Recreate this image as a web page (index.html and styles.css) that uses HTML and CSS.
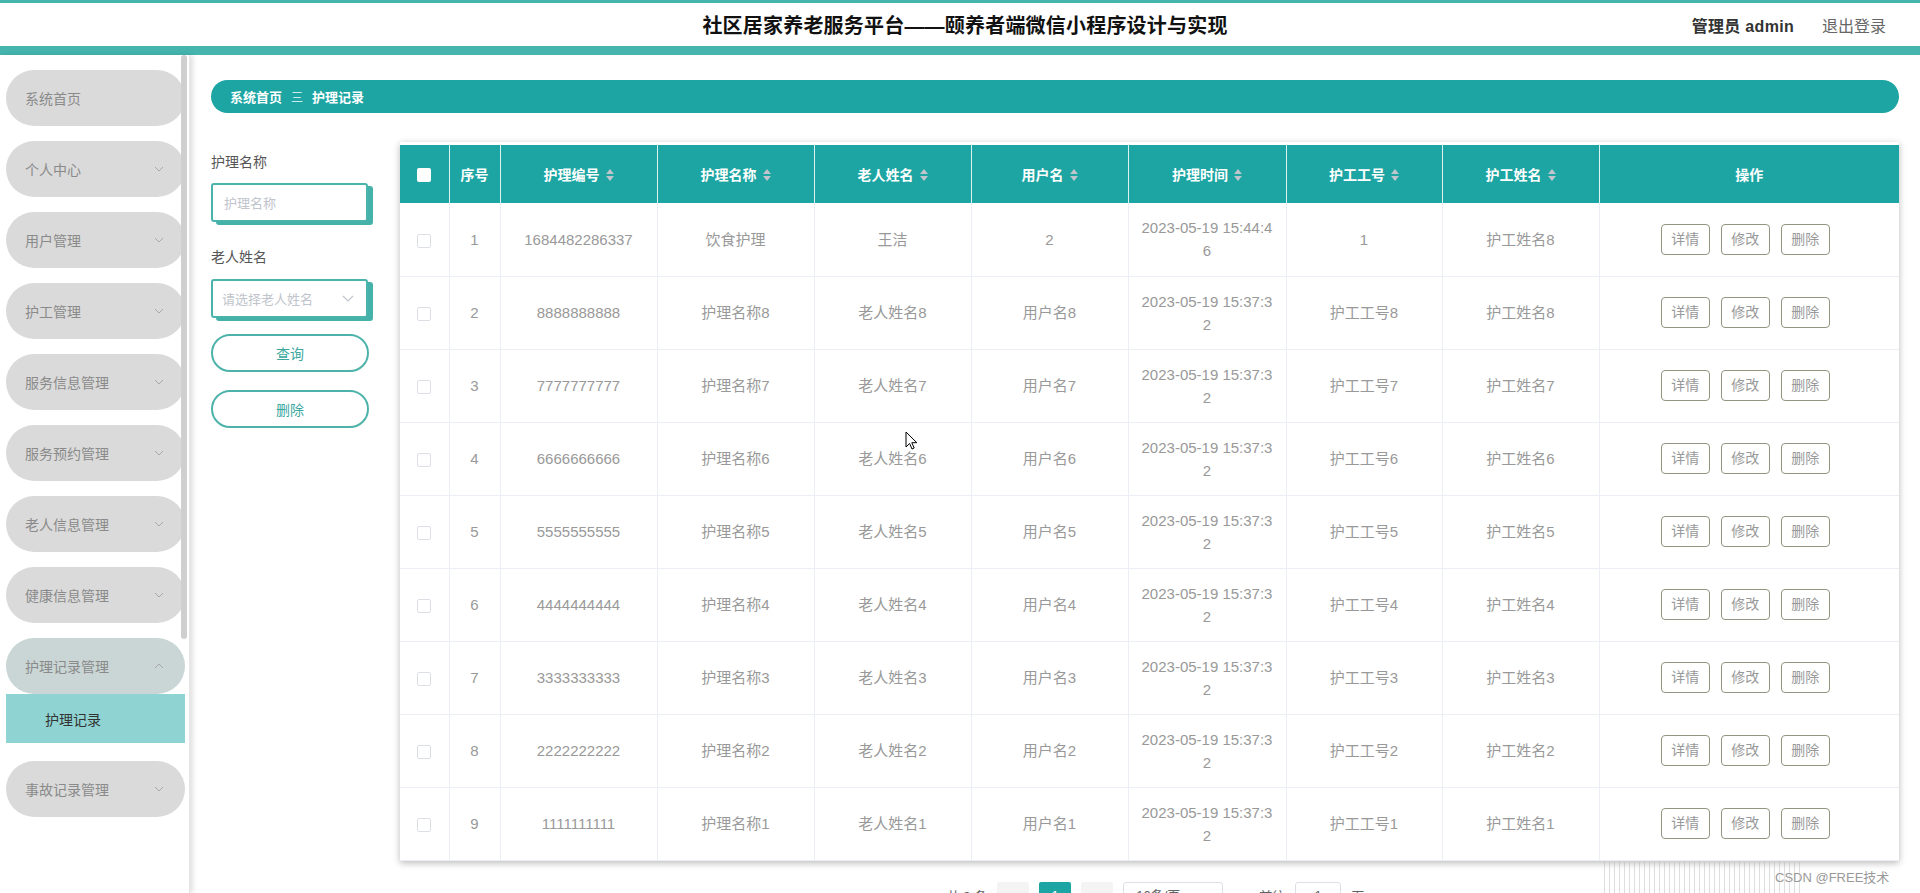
FILE: index.html
```html
<!DOCTYPE html>
<html lang="zh-CN">
<head>
<meta charset="utf-8">
<title>护理记录</title>
<link rel="stylesheet" href="styles.css">
</head>
<body>
<div class="app">
  <header class="topbar">
    <div class="spacer"></div>
    <div class="title">社区居家养老服务平台——颐养者端微信小程序设计与实现</div>
    <div class="user"><span class="admin">管理员 admin</span><span class="logout">退出登录</span></div>
  </header>
  <div class="main">
    <aside class="sidebar">
      <ul class="menu">
        <li class="item"><span>系统首页</span></li>
        <li class="item"><span>个人中心</span><svg class="chev" viewBox="0 0 10 6"><path d="M1 1l4 4 4-4"/></svg></li>
        <li class="item"><span>用户管理</span><svg class="chev" viewBox="0 0 10 6"><path d="M1 1l4 4 4-4"/></svg></li>
        <li class="item"><span>护工管理</span><svg class="chev" viewBox="0 0 10 6"><path d="M1 1l4 4 4-4"/></svg></li>
        <li class="item"><span>服务信息管理</span><svg class="chev" viewBox="0 0 10 6"><path d="M1 1l4 4 4-4"/></svg></li>
        <li class="item"><span>服务预约管理</span><svg class="chev" viewBox="0 0 10 6"><path d="M1 1l4 4 4-4"/></svg></li>
        <li class="item"><span>老人信息管理</span><svg class="chev" viewBox="0 0 10 6"><path d="M1 1l4 4 4-4"/></svg></li>
        <li class="item"><span>健康信息管理</span><svg class="chev" viewBox="0 0 10 6"><path d="M1 1l4 4 4-4"/></svg></li>
        <li class="group open">
          <div class="item active"><span>护理记录管理</span><svg class="chev" viewBox="0 0 10 6"><path d="M1 5l4-4 4 4"/></svg></div>
          <div class="sub">护理记录</div>
        </li>
        <li class="item"><span>事故记录管理</span><svg class="chev" viewBox="0 0 10 6"><path d="M1 1l4 4 4-4"/></svg></li>
      </ul>
      <div class="thumb"></div>
    </aside>
    <main class="content">
      <div class="crumb"><span class="crumb-home">系统首页</span><span class="crumb-sep">三</span><span class="crumb-cur">护理记录</span></div>
      <div class="workspace">
        <div class="filters">
          <div class="label">护理名称</div>
          <div class="field"><span class="ph">护理名称</span></div>
          <div class="label second">老人姓名</div>
          <div class="field select"><span class="ph">请选择老人姓名</span><svg class="sel-chev" viewBox="0 0 12 7"><path d="M1 1l5 5 5-5"/></svg></div>
          <div class="btn">查询</div>
          <div class="btn">删除</div>
        </div>
        <div class="list">
          <div class="panel">
            <table class="grid">
              <colgroup>
                <col class="c-cb"><col class="c-no"><col class="c-n"><col class="c-n"><col class="c-n"><col class="c-n"><col class="c-t"><col class="c-w"><col class="c-n"><col class="c-op">
              </colgroup>
              <thead>
                <tr>
                  <th><span class="hcb"></span></th>
                  <th>序号</th>
                  <th>护理编号<span class="caret"><i class="up"></i><i class="dn"></i></span></th>
                  <th>护理名称<span class="caret"><i class="up"></i><i class="dn"></i></span></th>
                  <th>老人姓名<span class="caret"><i class="up"></i><i class="dn"></i></span></th>
                  <th>用户名<span class="caret"><i class="up"></i><i class="dn"></i></span></th>
                  <th>护理时间<span class="caret"><i class="up"></i><i class="dn"></i></span></th>
                  <th>护工工号<span class="caret"><i class="up"></i><i class="dn"></i></span></th>
                  <th>护工姓名<span class="caret"><i class="up"></i><i class="dn"></i></span></th>
                  <th>操作</th>
                </tr>
              </thead>
              <tbody>
                <tr><td><span class="cb"></span></td><td>1</td><td>1684482286337</td><td>饮食护理</td><td>王洁</td><td>2</td><td class="time">2023-05-19 15:44:46</td><td>1</td><td>护工姓名8</td><td><div class="ops"><span class="op">详情</span><span class="op">修改</span><span class="op">删除</span></div></td></tr>
                <tr><td><span class="cb"></span></td><td>2</td><td>8888888888</td><td>护理名称8</td><td>老人姓名8</td><td>用户名8</td><td class="time">2023-05-19 15:37:32</td><td>护工工号8</td><td>护工姓名8</td><td><div class="ops"><span class="op">详情</span><span class="op">修改</span><span class="op">删除</span></div></td></tr>
                <tr><td><span class="cb"></span></td><td>3</td><td>7777777777</td><td>护理名称7</td><td>老人姓名7</td><td>用户名7</td><td class="time">2023-05-19 15:37:32</td><td>护工工号7</td><td>护工姓名7</td><td><div class="ops"><span class="op">详情</span><span class="op">修改</span><span class="op">删除</span></div></td></tr>
                <tr><td><span class="cb"></span></td><td>4</td><td>6666666666</td><td>护理名称6</td><td>老人姓名6</td><td>用户名6</td><td class="time">2023-05-19 15:37:32</td><td>护工工号6</td><td>护工姓名6</td><td><div class="ops"><span class="op">详情</span><span class="op">修改</span><span class="op">删除</span></div></td></tr>
                <tr><td><span class="cb"></span></td><td>5</td><td>5555555555</td><td>护理名称5</td><td>老人姓名5</td><td>用户名5</td><td class="time">2023-05-19 15:37:32</td><td>护工工号5</td><td>护工姓名5</td><td><div class="ops"><span class="op">详情</span><span class="op">修改</span><span class="op">删除</span></div></td></tr>
                <tr><td><span class="cb"></span></td><td>6</td><td>4444444444</td><td>护理名称4</td><td>老人姓名4</td><td>用户名4</td><td class="time">2023-05-19 15:37:32</td><td>护工工号4</td><td>护工姓名4</td><td><div class="ops"><span class="op">详情</span><span class="op">修改</span><span class="op">删除</span></div></td></tr>
                <tr><td><span class="cb"></span></td><td>7</td><td>3333333333</td><td>护理名称3</td><td>老人姓名3</td><td>用户名3</td><td class="time">2023-05-19 15:37:32</td><td>护工工号3</td><td>护工姓名3</td><td><div class="ops"><span class="op">详情</span><span class="op">修改</span><span class="op">删除</span></div></td></tr>
                <tr><td><span class="cb"></span></td><td>8</td><td>2222222222</td><td>护理名称2</td><td>老人姓名2</td><td>用户名2</td><td class="time">2023-05-19 15:37:32</td><td>护工工号2</td><td>护工姓名2</td><td><div class="ops"><span class="op">详情</span><span class="op">修改</span><span class="op">删除</span></div></td></tr>
                <tr><td><span class="cb"></span></td><td>9</td><td>1111111111</td><td>护理名称1</td><td>老人姓名1</td><td>用户名1</td><td class="time">2023-05-19 15:37:32</td><td>护工工号1</td><td>护工姓名1</td><td><div class="ops"><span class="op">详情</span><span class="op">修改</span><span class="op">删除</span></div></td></tr>
              </tbody>
            </table>
          </div>
          <div class="pager">
            <span class="total">共 9 条</span>
            <span class="pg-btn">&lsaquo;</span>
            <span class="pg-num active">1</span>
            <span class="pg-btn">&rsaquo;</span>
            <span class="pg-size">10条/页</span>
            <span class="pg-text">前往</span>
            <span class="pg-input">1</span>
            <span class="pg-text">页</span>
          </div>
        </div>
      </div>
    </main>
  </div>
  <div class="barcode"></div>
  <div class="watermark">CSDN @FREE技术</div>
  <svg class="cursor" viewBox="0 0 12 19"><path d="M1 1v15l3.6-3.5 2.4 5.5 2.2-1-2.4-5.3h5z" fill="#fff" stroke="#000" stroke-width="1" stroke-linejoin="round"/></svg>
</div>
</body>
</html>
```
FILE: styles.css
```css
* { box-sizing: border-box; }
html, body { margin: 0; padding: 0; }
body {
  width: 1920px;
  height: 893px;
  overflow: hidden;
  background: #fff;
  font-family: "Liberation Sans", "Noto Sans CJK SC", sans-serif;
  color: #333;
}
.app { position: relative; width: 1920px; height: 893px; overflow: hidden; }

/* top bar */
.topbar {
  height: 55px;
  border-top: 3px solid #45b4ad;
  border-bottom: 9px solid #45b5ae;
  display: grid;
  grid-template-columns: 1fr auto 1fr;
  align-items: center;
  background: #fff;
}
.title {
  font-size: 20px;
  font-weight: bold;
  color: #111;
  padding-left: 10px;
  letter-spacing: 0.2px;
}
.user {
  justify-self: end;
  padding-right: 34px;
  display: flex;
  gap: 28px;
  font-size: 16px;
}
.admin { color: #333; font-weight: bold; letter-spacing: 0.3px; }
.logout { color: #666; }

/* layout */
.main { display: flex; height: 838px; }
.sidebar {
  position: relative;
  width: 190px;
  flex: none;
  border-right: 1px solid #e6e6e6;
  box-shadow: 3px 0 5px rgba(0, 0, 0, 0.12);
  background: #fff;
}
.menu { list-style: none; margin: 0; padding: 15px 0 0 6px; }
.item {
  width: 179px;
  height: 56px;
  border-radius: 28px;
  background: #dadada;
  margin-bottom: 15px;
  display: flex;
  align-items: center;
  justify-content: space-between;
  padding: 0 21px 0 19px;
  font-size: 14px;
  color: #8a8a8a;
}
.chev { width: 10px; height: 6px; fill: none; stroke: #a8a8a8; stroke-width: 1; }
.group { margin-bottom: 18px; }
.group .item { margin-bottom: 0; }
.item.active { background: #c9d6d5; }
.sub {
  width: 179px;
  height: 49px;
  margin-top: 0;
  background: #8fd4d2;
  display: flex;
  align-items: center;
  padding-left: 39px;
  font-size: 14px;
  color: #333;
}
.thumb {
  position: absolute;
  left: 181px;
  top: 0;
  width: 6px;
  height: 584px;
  border-radius: 3px;
  background: #cfcfcf;
}

/* content */
.content { flex: 1; padding: 25px 21px 0 21px; min-width: 0; }
.crumb {
  height: 33px;
  border-radius: 17px;
  background: #1ca5a3;
  display: flex;
  align-items: center;
  padding-left: 19px;
  color: #fff;
  font-size: 13px;
  font-weight: bold;
}
.crumb-sep { font-weight: normal; color: rgba(255, 255, 255, 0.8); margin: 0 9px; font-size: 12px; }

.workspace { display: flex; gap: 25px; margin-top: 29px; }
.filters { width: 164px; flex: none; }
.label { height: 40px; line-height: 40px; font-size: 14px; color: #555; }
.label.second { margin-top: 15px; }
.field {
  margin-top: 1px;
  width: 157px;
  height: 39px;
  border: 2px solid #4ab3ab;
  border-radius: 3px;
  box-shadow: 5px 3px 0 #45b2aa;
  display: flex;
  align-items: center;
  justify-content: space-between;
  padding: 0 12px 0 11px;
  background: #fff;
}
.field.select { margin-top: 2px; padding-left: 9px; }
.ph { font-size: 13px; color: #c0c4cc; }
.sel-chev { width: 12px; height: 7px; fill: none; stroke: #c0c4cc; stroke-width: 1.2; }
.btn {
  width: 158px;
  height: 38px;
  border: 2px solid #4db3aa;
  border-radius: 19px;
  display: flex;
  align-items: center;
  justify-content: center;
  color: #3aa79f;
  font-size: 14px;
  margin-top: 16px;
}
.btn + .btn { margin-top: 18px; }

/* table */
.list { width: 1499px; flex: none; }
.panel {
  padding-top: 3px;
  background: #fff;
  box-shadow: 0 2px 7px rgba(0, 0, 0, 0.28);
}
.grid { width: 1499px; border-collapse: collapse; table-layout: fixed; }
.c-cb { width: 49px; }
.c-no { width: 51px; }
.c-n { width: 157px; }
.c-t { width: 158px; }
.c-w { width: 156px; }
.c-op { width: 300px; }
.grid th {
  height: 58px;
  background: #1ca5a3;
  color: #fff;
  font-size: 14px;
  font-weight: bold;
  text-align: center;
  border-right: 1px solid rgba(255, 255, 255, 0.85);
  padding: 0;
}
.grid th:last-child { border-right: 0; }
.caret {
  display: inline-flex;
  flex-direction: column;
  vertical-align: middle;
  margin-left: 6px;
  gap: 2px;
  position: relative;
  top: -1px;
}
.caret i { width: 0; height: 0; border-left: 4px solid transparent; border-right: 4px solid transparent; }
.caret .up { border-bottom: 5px solid #c0c4cc; }
.caret .dn { border-top: 5px solid #c0c4cc; }
.hcb { display: inline-block; width: 14px; height: 14px; border-radius: 2px; background: #fff; vertical-align: middle; }
.grid td {
  height: 73px;
  padding: 0 10px;
  text-align: center;
  font-size: 15px;
  color: #999;
  line-height: 23px;
  border-right: 1px solid #ebeef5;
  border-bottom: 1px solid #ebeef5;
  word-break: break-all;
}
.grid td:last-child { border-right: 0; }
.grid td:first-child { padding: 0; }
.cb { display: inline-block; width: 14px; height: 14px; border: 1px solid #dcdfe6; border-radius: 2px; background: #fff; vertical-align: middle; }
.ops { display: flex; justify-content: center; gap: 11px; padding-right: 8px; }
.op {
  width: 49px;
  height: 31px;
  border: 1px solid #949480;
  border-radius: 4px;
  display: flex;
  align-items: center;
  justify-content: center;
  font-size: 14px;
  color: #999;
}

/* pager */
.pager {
  margin-top: 21px;
  display: flex;
  justify-content: center;
  align-items: center;
  gap: 10px;
  font-size: 13px;
  color: #606266;
  padding-left: 12px;
}
.pg-btn, .pg-num {
  height: 28px;
  min-width: 32px;
  border-radius: 2px;
  background: #f4f4f5;
  display: flex;
  align-items: center;
  justify-content: center;
  color: #c0c4cc;
}
.pg-num.active { background: #1ca5a3; color: #fff; }
.pg-size { width: 100px; height: 28px; border: 1px solid #dcdfe6; border-radius: 3px; padding-left: 12px; line-height: 26px; margin: 0 26px 0 0; }
.pg-input { width: 46px; height: 28px; border: 1px solid #dcdfe6; border-radius: 3px; text-align: center; line-height: 26px; }

/* overlays */
.barcode {
  position: absolute;
  left: 1604px;
  top: 862px;
  width: 196px;
  height: 31px;
  background: repeating-linear-gradient(90deg, rgba(170, 170, 170, 0.55) 0 1px, transparent 1px 5px);
  opacity: 0.7;
}
.watermark {
  position: absolute;
  left: 1775px;
  top: 867px;
  font-size: 13px;
  color: #999;
  text-shadow: 0 0 2px #fff;
}
.cursor { position: absolute; left: 905px; top: 431px; width: 12px; height: 19px; }
```
